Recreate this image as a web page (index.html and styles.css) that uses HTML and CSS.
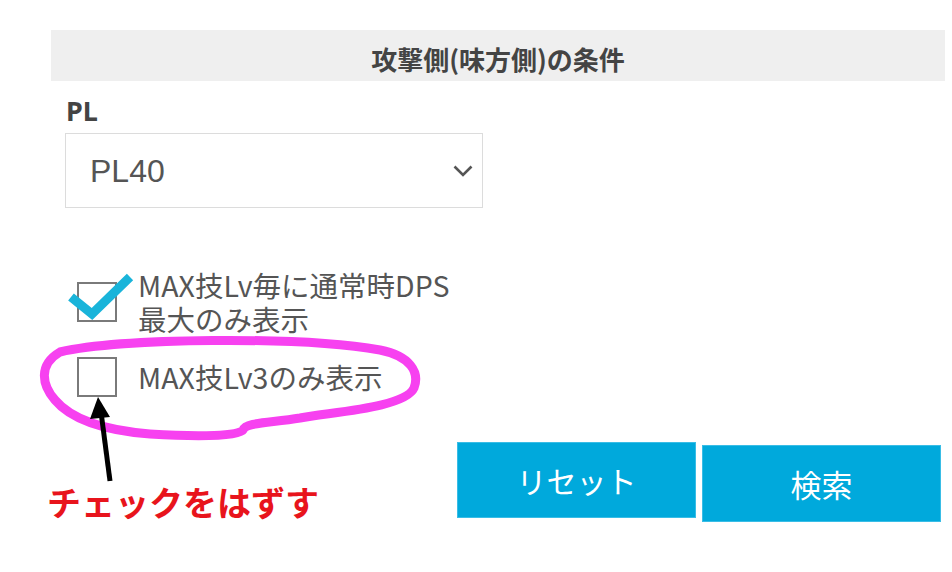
FILE: index.html
```html
<!DOCTYPE html>
<html lang="ja">

<head>
    <meta charset="UTF-8">
    <meta name="viewport" content="width=device-width, initial-scale=1.0">
    <title>攻撃側の条件</title>
    <link rel="stylesheet" href="styles.css">
</head>

<body>
    <div class="panel">
        <div class="panel-title">攻撃側(味方側)の条件</div>

        <div class="field">
            <label for="pl-select">PL</label>
            <div class="select-wrap">
                <select id="pl-select">
                    <option>PL40</option>
                </select>
                <svg class="chevron" width="20" height="12" viewBox="0 0 20 12">
                    <polyline points="1.5,1.5 10,10 18.5,1.5" fill="none" stroke="#555" stroke-width="2.6" />
                </svg>
            </div>
        </div>

        <div class="options">
            <div class="option">
                <span class="checkbox checked">
                    <svg class="check" width="68" height="52" viewBox="0 0 68 52">
                        <polyline points="4,26 25,43 63,6" fill="none" stroke="#19b4da" stroke-width="9" />
                    </svg>
                </span>
                <span class="option-text">MAX技Lv毎に通常時DPS<br>最大のみ表示</span>
            </div>
            <div class="option">
                <span class="checkbox"></span>
                <span class="option-text">MAX技Lv3のみ表示</span>
            </div>
        </div>

        <div class="actions">
            <div class="note">チェックをはずす</div>
            <div class="button-group">
                <button id="reset">リセット</button>
                <button id="search">検索</button>
            </div>
        </div>
    </div>

    <svg class="markup" width="952" height="572" viewBox="0 0 952 572">
        <path d="M 60 352 C 120 338, 300 336, 380 350 C 410 356, 420 372, 414 388 C 405 408, 330 412, 300 418 C 270 423, 246 422, 243 430 C 240 436, 200 437, 150 434 C 100 430, 70 418, 55 400 C 42 385, 38 365, 60 352 Z"
            fill="none" stroke="#f741f0" stroke-width="9" stroke-linejoin="round" />
        <line x1="110" y1="481" x2="101" y2="412" stroke="#000" stroke-width="5" />
        <polygon points="98,397 90,419 110,417" fill="#000" />
    </svg>
</body>

</html>
```

FILE: styles.css
```css
body {
    margin: 0;
    position: relative;
    width: 952px;
    height: 572px;
    background-color: #fff;
    font-family: 'Noto Sans CJK JP', 'Noto Sans', sans-serif;
    color: #555;
    overflow: hidden;
}

.panel {
    margin: 30px 7px 0 51px;
}

.panel-title {
    height: 45px;
    padding-top: 6px;
    line-height: 45px;
    background-color: #efefef;
    text-align: center;
    font-size: 26px;
    font-weight: 700;
    color: #444;
}

.field {
    padding-left: 14px;
    margin-top: 14px;
}

.field label {
    display: block;
    padding-left: 1px;
    font-family: 'Noto Sans', sans-serif;
    font-size: 27px;
    font-weight: 700;
    line-height: 32px;
    color: #444;
}

.select-wrap {
    position: relative;
    width: 418px;
    margin-top: 6px;
}

select {
    display: block;
    width: 418px;
    height: 75px;
    padding: 0 0 0 24px;
    border: 1px solid #dcdcdc;
    border-radius: 0;
    background-color: #fff;
    font-family: 'Liberation Sans', Arial, sans-serif;
    font-size: 32px;
    color: #555;
    appearance: none;
    -webkit-appearance: none;
}

.chevron {
    position: absolute;
    right: 10px;
    top: 32px;
}

.options {
    margin-top: 60px;
    padding-left: 26px;
}

.option {
    display: flex;
    align-items: center;
}

.option + .option {
    margin-top: 21px;
}

.checkbox {
    position: relative;
    flex: none;
    width: 36px;
    height: 36px;
    border: 2px solid #7a7a7a;
    background-color: #fff;
}

.check {
    position: absolute;
    left: -12px;
    top: -13px;
}

.option-text {
    margin-left: 21px;
    font-size: 28.5px;
    line-height: 34px;
    color: #555;
}

.actions {
    display: flex;
    align-items: flex-start;
    margin-top: 45px;
}

.note {
    margin-left: -4px;
    margin-top: 43px;
    font-size: 34px;
    font-weight: 700;
    line-height: 34px;
    color: #e8141c;
}

.button-group {
    display: flex;
    align-items: flex-start;
    gap: 6px;
    margin-left: auto;
    margin-right: 4px;
}

button {
    width: 239px;
    height: 76px;
    padding: 0;
    border: 1px solid #39bde6;
    border-radius: 0;
    background-color: #00a9dc;
    color: #fff;
    font-family: 'Noto Sans CJK JP', sans-serif;
    font-size: 30px;
    cursor: pointer;
}

#search {
    height: 77px;
    margin-top: 3px;
    font-size: 31px;
}

.markup {
    position: absolute;
    left: 0;
    top: 0;
    pointer-events: none;
}
```
